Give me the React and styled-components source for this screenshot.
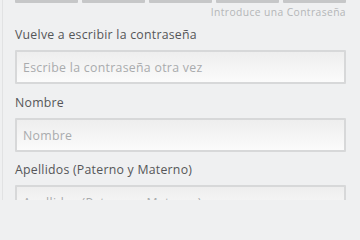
import React from "react";
import styled, { createGlobalStyle } from "styled-components";

const Global = createGlobalStyle`
  html, body { margin: 0; padding: 0; background: #eff0f1; }
  body { font-family: "Open Sans", "Liberation Sans", sans-serif; }
  * { box-sizing: border-box; }
`;

const Panel = styled.div`
  margin-left: 2px;
  border-left: 1px solid #e1e2e3;
  padding: 0 14px 0 12px;
  height: 200px;
  overflow: hidden;
`;

const Bars = styled.div`
  display: grid;
  grid-template-columns: repeat(5, 1fr);
  gap: 4px;
`;

const Bar = styled.div`
  height: 3px;
  background: #c6c7c8;
  border-radius: 0 0 1px 1px;
`;

const Hint = styled.div`
  text-align: right;
  font-size: 10.3px;
  letter-spacing: 0.4px;
  line-height: 14px;
  color: #b4b6b8;
  margin-top: 2px;
`;

const Field = styled.div`
  display: flex;
  flex-direction: column;
  margin-top: ${(p) => p.$mt}px;
`;

const Label = styled.label`
  font-size: 12.3px;
  letter-spacing: 0.25px;
  line-height: 14px;
  color: #555658;
  margin-bottom: 8px;
`;

const Input = styled.input`
  display: block;
  height: 34px;
  width: 100%;
  margin: 0;
  border: 2px solid #d7d8d9;
  border-radius: 1px;
  background: linear-gradient(to bottom, #eeeeee, #fbfbfb);
  padding: 0 6px;
  font-family: "Open Sans", "Liberation Sans", sans-serif;
  font-size: 12.3px;
  letter-spacing: 0.3px;
  color: #555;
  outline: none;
  &::placeholder { color: #a9abad; }
`;

const fields = [
  { label: "Vuelve a escribir la contraseña", ph: "Escribe la contraseña otra vez", mt: 9 },
  { label: "Nombre", ph: "Nombre", mt: 12 },
  { label: "Apellidos (Paterno y Materno)", ph: "Apellidos (Paterno y Materno)", mt: 11 },
];

export default function App() {
  return (
    <>
      <Global />
      <Panel>
        <Bars>
          {[0, 1, 2, 3, 4].map((i) => (
            <Bar key={i} />
          ))}
        </Bars>
        <Hint>Introduce una Contraseña</Hint>
        {fields.map((f) => (
          <Field key={f.label} $mt={f.mt}>
            <Label>{f.label}</Label>
            <Input type="text" placeholder={f.ph} />
          </Field>
        ))}
      </Panel>
    </>
  );
}
